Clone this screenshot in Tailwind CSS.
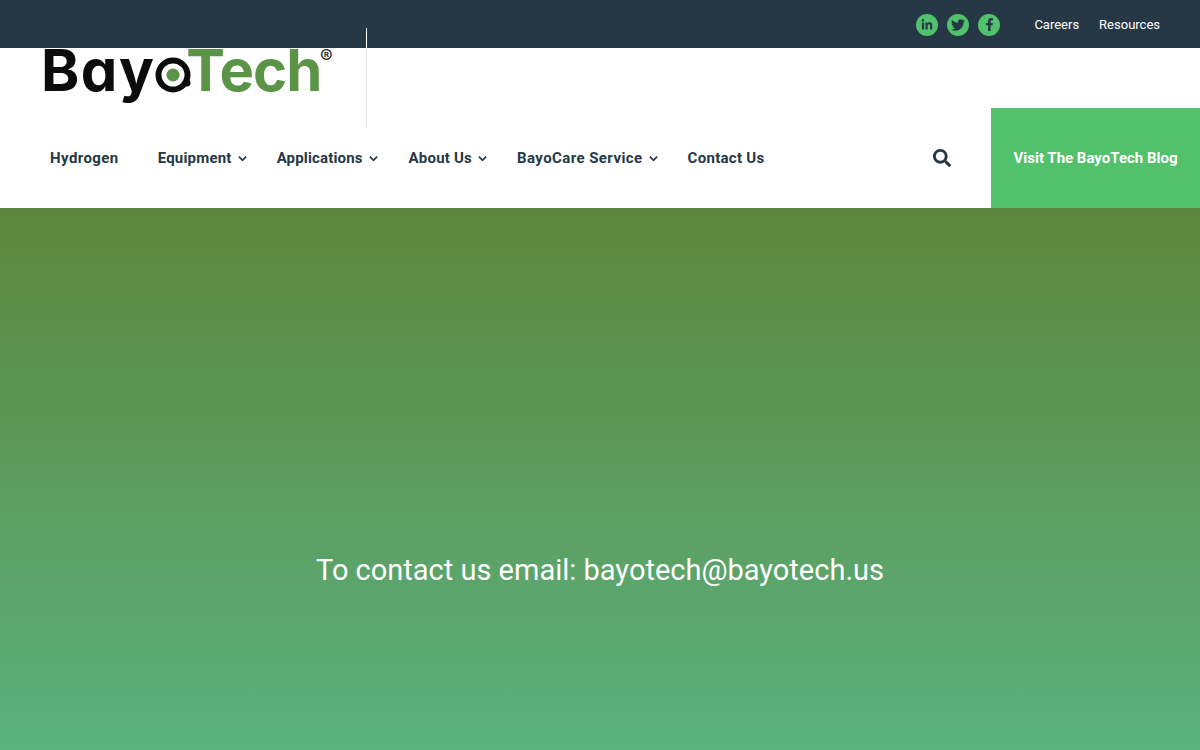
<!DOCTYPE html>
<html lang="en">
<head>
    <meta charset="UTF-8">
    <meta name="viewport" content="width=device-width, initial-scale=1.0">
    <title>Contact Us - BayoTech</title>
    <script src="https://cdn.jsdelivr.net/npm/@tailwindcss/browser@4"></script>
</head>
<body class="h-[750px] overflow-hidden bg-white font-['Roboto',sans-serif]">
    <!-- top bar -->
    <div class="relative z-10 flex h-12 items-center justify-end bg-[#263746] pr-10">
        <div class="mt-px flex items-center gap-[9px]">
            <a href="#" class="flex h-[22px] w-[22px] items-center justify-center rounded-full bg-[#52c16b] text-[#263746]">
                <svg class="h-3 w-3" viewBox="0 0 448 512" fill="currentColor"><path d="M100.28 448H7.4V148.9h92.88zM53.79 108.1C24.09 108.1 0 83.5 0 53.8a53.79 53.79 0 0 1 107.58 0c0 29.7-24.1 54.3-53.79 54.3zM447.9 448h-92.68V302.4c0-34.7-.7-79.2-48.29-79.2-48.29 0-55.69 37.7-55.69 76.7V448h-92.78V148.9h89.08v40.8h1.3c12.4-23.5 42.69-48.3 87.88-48.3 94 0 111.28 61.9 111.28 142.3V448z"/></svg>
            </a>
            <a href="#" class="flex h-[22px] w-[22px] items-center justify-center rounded-full bg-[#52c16b] text-[#263746]">
                <svg class="h-[14px] w-[14px]" viewBox="0 0 512 512" fill="currentColor"><path d="M459.37 151.716c.325 4.548.325 9.097.325 13.645 0 138.72-105.583 298.558-298.558 298.558-59.452 0-114.68-17.219-161.137-47.106 8.447.974 16.568 1.299 25.34 1.299 49.055 0 94.213-16.568 130.274-44.832-46.132-.975-84.792-31.188-98.112-72.772 6.498.974 12.995 1.624 19.818 1.624 9.421 0 18.843-1.3 27.614-3.573-48.081-9.747-84.143-51.98-84.143-102.985v-1.299c13.969 7.797 30.214 12.67 47.431 13.319-28.264-18.843-46.781-51.005-46.781-87.391 0-19.492 5.197-37.36 14.294-52.954 51.655 63.675 129.3 105.258 216.365 109.807-1.624-7.797-2.599-15.918-2.599-24.04 0-57.828 46.782-104.934 104.934-104.934 30.213 0 57.502 12.67 76.67 33.137 23.715-4.548 46.456-13.32 66.599-25.34-7.798 24.366-24.366 44.833-46.132 57.827 21.117-2.273 41.584-8.122 60.426-16.243-14.292 20.791-32.161 39.308-52.628 54.253z"/></svg>
            </a>
            <a href="#" class="flex h-[22px] w-[22px] items-center justify-center rounded-full bg-[#52c16b] text-[#263746]">
                <svg class="h-[13px] w-[13px]" viewBox="0 0 320 512" fill="currentColor"><path d="M279.14 288l14.22-92.66h-88.91v-60.13c0-25.35 12.42-50.06 52.24-50.06h40.42V6.26S260.43 0 225.36 0c-73.22 0-121.08 44.38-121.08 124.72v70.62H22.89V288h81.39v224h100.17V288z"/></svg>
            </a>
        </div>
        <div class="ml-[34px] mt-px flex gap-5 text-[13px] text-white">
            <a href="#">Careers</a>
            <a href="#">Resources</a>
        </div>
        <!-- divider next to the logo -->
        <div class="absolute left-[366px] top-7 h-5 w-px bg-white"></div>
    </div>

    <header class="relative h-40 bg-white">
        <div class="absolute left-[366px] top-0 h-20 w-px bg-[#e3e3e3]"></div>

        <!-- logo, the h tucks under the top bar -->
        <div class="flex h-[60px] items-start pl-[41px]">
            <a href="#" class="relative -mt-[13px] flex items-center font-['Inter',sans-serif] text-[58px] font-bold leading-[70px] [font-feature-settings:'cv11']">
                <span class="tracking-[1.5px] text-[#0c0c0c]">Bay</span>
                <svg class="z-10 -mr-[5px] mt-[9px] h-[36px] w-[36px] shrink-0" viewBox="0 0 36 36">
                    <circle cx="18" cy="18" r="14.5" fill="none" stroke="#0c0c0c" stroke-width="6"/>
                    <circle cx="18" cy="18" r="6.5" fill="#5b9446"/>
                    <circle cx="32" cy="26" r="3.5" fill="#0c0c0c"/>
                </svg>
                <span class="tracking-[-1px] text-[#5b9446]">Tech</span>
                <span class="absolute left-[279px] top-[12px] text-[19px] font-normal leading-none text-[#222]">®</span>
            </a>
        </div>

        <!-- nav -->
        <div class="flex h-[100px] items-center">
            <nav class="flex items-center pl-[50px] text-[15px] font-bold text-[#263746]">
                <a href="#" class="mr-[39px] tracking-[0.42px]">Hydrogen</a>
                <a href="#" class="mr-[30px] flex items-center gap-[6px] tracking-[0.2px]">Equipment
                    <svg class="h-[9px] w-[9px]" viewBox="0 0 10 10" fill="none" stroke="currentColor" stroke-width="2"><path d="M1 3l4 4 4-4"/></svg>
                </a>
                <a href="#" class="mr-[31px] flex items-center gap-[6px] tracking-[0.15px]">Applications
                    <svg class="h-[9px] w-[9px]" viewBox="0 0 10 10" fill="none" stroke="currentColor" stroke-width="2"><path d="M1 3l4 4 4-4"/></svg>
                </a>
                <a href="#" class="mr-[30px] flex items-center gap-[6px] tracking-[0.2px]">About Us
                    <svg class="h-[9px] w-[9px]" viewBox="0 0 10 10" fill="none" stroke="currentColor" stroke-width="2"><path d="M1 3l4 4 4-4"/></svg>
                </a>
                <a href="#" class="mr-[30px] flex items-center gap-[6px] tracking-[0.42px]">BayoCare Service
                    <svg class="h-[9px] w-[9px]" viewBox="0 0 10 10" fill="none" stroke="currentColor" stroke-width="2"><path d="M1 3l4 4 4-4"/></svg>
                </a>
                <a href="#" class="tracking-[0.3px]">Contact Us</a>
            </nav>
            <a href="#" class="ml-auto mr-10 text-[#263746]">
                <svg class="h-[18px] w-[18px]" viewBox="0 0 512 512" fill="currentColor"><path d="M505 442.7L405.3 343c-4.5-4.5-10.6-7-17-7H372c27.6-35.3 44-79.7 44-128C416 93.1 322.9 0 208 0S0 93.1 0 208s93.1 208 208 208c48.3 0 92.7-16.4 128-44v16.3c0 6.4 2.5 12.5 7 17l99.7 99.7c9.4 9.4 24.6 9.4 33.9 0l28.3-28.3c9.4-9.4 9.4-24.6.1-34zM208 336c-70.7 0-128-57.2-128-128 0-70.7 57.2-128 128-128 70.7 0 128 57.2 128 128 0 70.7-57.2 128-128 128z"/></svg>
            </a>
            <a href="#" class="flex h-full w-[209px] items-center justify-center bg-[#52c16b] text-[15px] font-bold text-white">Visit The BayoTech Blog</a>
        </div>
    </header>

    <!-- hero -->
    <main class="flex h-[542px] items-center justify-center bg-gradient-to-b from-[#5c863b] to-[#5ab27f] pt-[183px]">
        <p class="text-[29px] text-white">To contact us email: bayotech@bayotech.us</p>
    </main>
</body>
</html>
